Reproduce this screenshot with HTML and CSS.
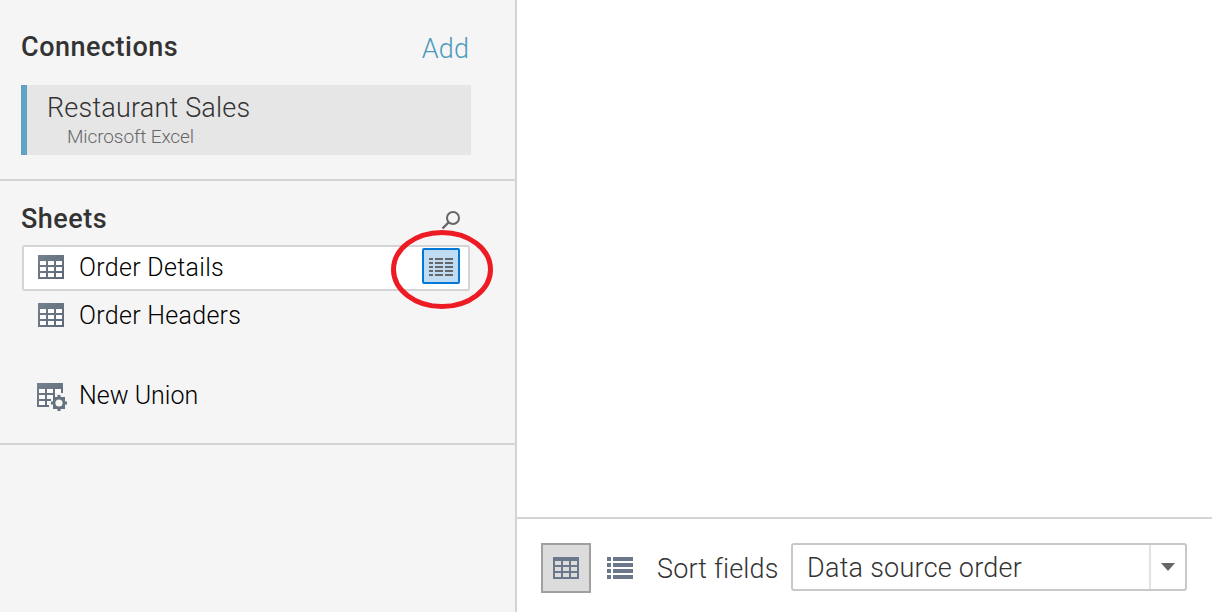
FILE: index.html
```html
<!DOCTYPE html>
<html lang="en">
<head>
  <meta charset="UTF-8">
  <title>Data Source</title>
  <link rel="stylesheet" href="styles.css">
</head>
<body>

  <div class="sidebar">
    <div class="connections">
      <div class="section-header">
        <h2>Connections</h2>
        <a class="add">Add</a>
      </div>
      <div class="connection">
        <div class="connection-name">Restaurant Sales</div>
        <div class="connection-type">Microsoft Excel</div>
      </div>
    </div>

    <div class="sheets">
      <div class="section-header">
        <h2>Sheets</h2>
        <svg class="search" width="20" height="20" viewBox="0 0 20 20">
          <circle cx="12" cy="8" r="6" fill="none" stroke="#666" stroke-width="2"/>
          <path d="M7.5 12.5L1.5 18.5" stroke="#666" stroke-width="2.4"/>
        </svg>
      </div>
      <div class="sheet selected">
        <svg class="icon" width="26" height="24" viewBox="0 0 26 24">
          <defs>
            <linearGradient id="steel" x1="0" y1="0" x2="1" y2="1">
              <stop offset="0" stop-color="#76818f"/>
              <stop offset="1" stop-color="#5c6878"/>
            </linearGradient>
          </defs>
          <path fill="url(#steel)" d="M0 0h26v24H0z"/>
          <path fill="#fff" d="M2 6h6v4H2zM10 6h6v4h-6zM18 6h6v4h-6zM2 12h6v4H2zM10 12h6v4h-6zM18 12h6v4h-6zM2 18h6v4H2zM10 18h6v4h-6zM18 18h6v4h-6z"/>
        </svg>
        <span class="order-details">Order Details</span>
        <div class="view-data">
          <svg width="24" height="18" viewBox="0 0 24 18">
            <path fill="#666" d="M0 0h4v2H0zM6 0h8v2H6zM16 0h8v2h-8zM0 4h4v2H0zM6 4h8v2H6zM16 4h8v2h-8zM0 8h4v2H0zM6 8h8v2H6zM16 8h8v2h-8zM0 12h4v2H0zM6 12h8v2H6zM16 12h8v2h-8zM0 16h4v2H0zM6 16h8v2H6zM16 16h8v2h-8z"/>
          </svg>
        </div>
        <svg class="highlight" width="102" height="80" viewBox="0 0 102 80">
          <ellipse cx="51" cy="40.5" rx="48.5" ry="37" fill="none" stroke="#ed1c24" stroke-width="5"/>
        </svg>
      </div>
      <div class="sheet">
        <svg class="icon" width="26" height="24" viewBox="0 0 26 24">
          <path fill="url(#steel)" d="M0 0h26v24H0z"/>
          <path fill="#fff" d="M2 6h6v4H2zM10 6h6v4h-6zM18 6h6v4h-6zM2 12h6v4H2zM10 12h6v4h-6zM18 12h6v4h-6zM2 18h6v4H2zM10 18h6v4h-6zM18 18h6v4h-6z"/>
        </svg>
        <span class="order-headers">Order Headers</span>
      </div>
      <div class="sheet union">
        <svg class="icon" width="31" height="28" viewBox="0 0 31 28">
          <path fill="url(#steel)" d="M0 0h26v12h-8v12H0z"/>
          <path fill="#fff" d="M2 6h6v4H2zM10 6h6v4h-6zM18 6h6v4h-6zM2 12h6v4H2zM10 12h6v4h-6zM2 18h6v4H2zM10 18h2v4h-2z"/>
          <path fill="#f5f5f5" d="M18 10h8v2h4v14H14v-2h-2v-6h2v-4h4z"/>
          <path fill="#667180" d="M20 12h4v2h4v4h2v4h-2v4h-4v2h-4v-2h-4v-4h-2v-4h2v-4h4z"/>
          <circle cx="22" cy="20" r="3.6" fill="#f5f5f5"/>
          <path fill="#a9b0b9" d="M20 12h1v2h-1zM23 12h1v2h-1zM20 26h1v2h-1zM23 26h1v2h-1zM14 18h2v1h-2zM14 21h2v1h-2zM28 18h2v1h-2zM28 21h2v1h-2z"/>
        </svg>
        <span class="new-union">New Union</span>
      </div>
    </div>
  </div>

  <div class="main">
    <div class="canvas"></div>
    <div class="toolbar">
      <div class="grid-button">
        <svg width="26" height="22" viewBox="0 0 26 22">
          <path fill="#6b778a" d="M0 0h26v22H0z"/>
          <path fill="#dcdcdc" d="M2 4h6v4H2zM10 4h6v4h-6zM18 4h6v4h-6zM2 10h6v4H2zM10 10h6v4h-6zM18 10h6v4h-6zM2 16h6v4H2zM10 16h6v4h-6zM18 16h6v4h-6z"/>
        </svg>
      </div>
      <svg class="list-button" width="26" height="22" viewBox="0 0 26 22">
        <path fill="#6b778a" d="M0 0h4v4H0zM6 0h20v4H6zM0 6h4v4H0zM6 6h20v4H6zM0 12h4v4H0zM6 12h20v4H6zM0 18h4v4H0zM6 18h20v4H6z"/>
      </svg>
      <div class="sort-label">Sort fields</div>
      <div class="select">
        <div class="select-value">Data source order</div>
        <div class="select-arrow">
          <svg width="14" height="8" viewBox="0 0 14 8"><path fill="#666" d="M0 0h14L7 8z"/></svg>
        </div>
      </div>
    </div>
  </div>

</body>
</html>
```
FILE: styles.css
```css
* { box-sizing: border-box; }

body {
  margin: 0;
  height: 612px;
  display: flex;
  overflow: hidden;
  font-family: Roboto, "Liberation Sans", sans-serif;
  font-weight: 300;
  color: #333;
  background: #fff;
  white-space: nowrap;
}

svg {
  display: block;
  flex-shrink: 0;
}

.sidebar {
  width: 517px;
  border-right: 2px solid #d4d4d4;
  background: #f5f5f5;
}

.section-header {
  display: flex;
  justify-content: space-between;
}

h2 {
  margin: 0;
  font-size: 27px;
  line-height: 32px;
  font-weight: 500;
  letter-spacing: 0.5px;
}

.connections {
  height: 181px;
  padding: 31px 44px 0 21px;
  border-bottom: 2px solid #d4d4d4;
}

.add {
  margin-right: 2px;
  padding-top: 2px;
  font-size: 27px;
  line-height: 32px;
  letter-spacing: 0.1px;
  color: #4c9bba;
}

.connection {
  height: 70px;
  margin-top: 20px;
  padding: 7px 0 0 20px;
  border-left: 6px solid #62a3c5;
  background: #e6e6e6;
}

.connection-name {
  font-size: 27px;
  line-height: 32px;
  letter-spacing: 0.2px;
}

.connection-type {
  padding: 1px 0 0 20px;
  font-size: 19px;
  line-height: 24px;
  letter-spacing: -0.1px;
  color: #666;
}

.sheets {
  height: 264px;
  padding: 22px 45px 0 21px;
  border-bottom: 2px solid #d4d4d4;
}

.search {
  margin: 7px 9px 0 0;
}

.sheet {
  position: relative;
  display: flex;
  align-items: center;
  height: 46px;
  margin: 0 0 2px 1px;
  padding: 0 8px 2px 14px;
  border: 2px solid transparent;
  border-radius: 2px;
  font-size: 25px;
  color: #000;
}

.selected {
  margin-top: 10px;
  border-color: #d4d4d4;
  background: #fff;
}

.icon {
  margin-right: 15px;
}

.order-details,
.order-headers {
  letter-spacing: 0.3px;
}

.union {
  margin-top: 34px;
}

.union .icon {
  margin: 4px 11px 0 -1px;
}

.view-data {
  display: flex;
  align-items: center;
  justify-content: center;
  width: 38px;
  height: 36px;
  margin: -2px 0 0 auto;
  padding-top: 2px;
  border: 2px solid #0078d7;
  border-radius: 2px;
  background: #c0dcf3;
}

/* red circle drawn over the view data button */
.highlight {
  position: absolute;
  top: -18px;
  right: -25px;
  z-index: 1;
}

.main {
  flex: 1;
  display: flex;
  flex-direction: column;
}

.canvas {
  flex: 1;
}

.toolbar {
  display: flex;
  align-items: flex-start;
  height: 95px;
  padding: 24px 25px 0 24px;
  border-top: 2px solid #d4d4d4;
  font-size: 27px;
}

.grid-button {
  display: flex;
  align-items: center;
  justify-content: center;
  width: 50px;
  height: 50px;
  border: 2px solid #a0a0a0;
  background: #dcdcdc;
}

.list-button {
  margin: 14px 24px 0 16px;
}

.sort-label {
  width: 134px;
  line-height: 52px;
  letter-spacing: 0.15px;
}

.select {
  display: flex;
  flex: 1;
  height: 48px;
  border: 2px solid #c8c8c8;
  border-radius: 3px;
}

.select-value {
  flex: 1;
  padding-left: 14px;
  line-height: 46px;
  letter-spacing: 0.25px;
}

.select-arrow {
  display: flex;
  align-items: center;
  justify-content: center;
  width: 36px;
  border-left: 2px solid #e2e2e2;
}
```
